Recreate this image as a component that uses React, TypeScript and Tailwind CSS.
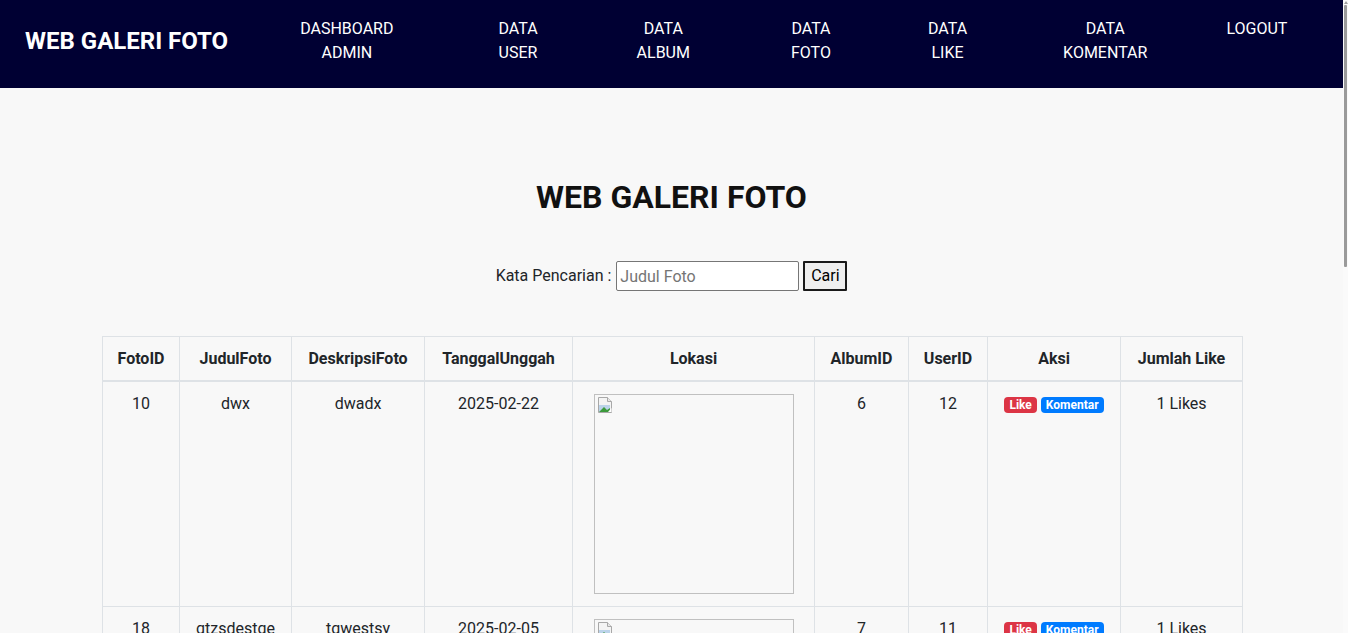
import React from "react";

const navItems = [
  { lines: ["DASHBOARD", "ADMIN"], ml: "ml-[72px]" },
  { lines: ["DATA", "USER"], ml: "ml-[105px]" },
  { lines: ["DATA", "ALBUM"], ml: "ml-[99px]" },
  { lines: ["DATA", "FOTO"], ml: "ml-[101px]" },
  { lines: ["DATA", "LIKE"], ml: "ml-[97px]" },
  { lines: ["DATA", "KOMENTAR"], ml: "ml-[96px]" },
  { lines: ["LOGOUT"], ml: "ml-[79px]" },
];

const columns = [
  { label: "FotoID", w: "w-[77px]" },
  { label: "JudulFoto", w: "w-[112px]" },
  { label: "DeskripsiFoto", w: "w-[133px]" },
  { label: "TanggalUnggah", w: "w-[148px]" },
  { label: "Lokasi", w: "w-[242px]" },
  { label: "AlbumID", w: "w-[94px]" },
  { label: "UserID", w: "w-[79px]" },
  { label: "Aksi", w: "w-[133px]" },
  { label: "Jumlah Like", w: "w-[122px]" },
];

const rows = [
  { id: 10, judul: "dwx", desk: "dwadx", tgl: "2025-02-22", album: 6, user: 12, likes: 1 },
  { id: 18, judul: "gtzsdestge", desk: "tgwestsy", tgl: "2025-02-05", album: 7, user: 11, likes: 1 },
  { id: 19, judul: "pantai", desk: "liburan", tgl: "2025-02-05", album: 7, user: 11, likes: 0 },
  { id: 21, judul: "gunung", desk: "pemandangan", tgl: "2025-02-04", album: 8, user: 12, likes: 0 },
];

function BrokenImage() {
  return (
    <div className="w-[200px] h-[200px] border border-[#c0c0c0] mx-auto">
      <svg width="18" height="18" viewBox="0 0 18 18" className="mt-[1px] ml-[1px]">
        <path d="M2.5 1.5h9l4 4v11h-13z" fill="#f4f4f4" stroke="#a8a8a8" />
        <path d="M11.5 1.5v4h4" fill="#e8e8e8" stroke="#a8a8a8" />
        <path d="M3 9h11v7H3z" fill="#bcd3ea" />
        <path d="M3 16l5-5 3 3 3-2v4z" fill="#3c9a3c" />
        <path d="M12 16l3.5-4v4z" fill="#ffffff" />
      </svg>
    </div>
  );
}

export default function App() {
  return (
    <div className="flex h-screen overflow-hidden bg-[#f8f8f8] text-[#212529] font-['Roboto','Liberation_Sans',sans-serif]">
      <div className="w-[1343px] shrink-0">
        <nav className="h-[88px] bg-[#000033] flex items-start text-white">
          <a className="ml-[25px] mt-[27px] text-[24px] font-bold leading-[28px]">WEB GALERI FOTO</a>
          <ul className="flex items-start">
            {navItems.map((item, i) => (
              <li key={i} className={`${item.ml} mt-[17px] text-center text-[16px] leading-[24px]`}>
                {item.lines.map(l => (
                  <div key={l}>{l}</div>
                ))}
              </li>
            ))}
          </ul>
        </nav>

        <main>
          <h1 className="mt-[90px] text-center text-[32px] font-bold leading-[38px] text-[#111111]">WEB GALERI FOTO</h1>

          <form className="mt-[45px] flex justify-center items-center gap-[4px] text-[16px]">
            <label className="mr-[1px]">Kata Pencarian :</label>
            <input
              type="text"
              placeholder="Judul Foto"
              className="w-[183px] h-[30px] px-[3px] border border-[#767676] rounded-[2px] bg-white placeholder:text-[#757575] outline-none"
            />
            <button type="button" className="w-[44px] h-[30px] border-2 border-[#1a1a1a] bg-[#efefef] rounded-[1px] text-black">
              Cari
            </button>
          </form>

          <table className="mt-[45px] ml-[102px] w-[1140px] table-fixed border-collapse text-[16px]">
            <thead>
              <tr>
                {columns.map(c => (
                  <th
                    key={c.label}
                    className={`${c.w} border border-[#dee2e6] border-b-2 pt-[12px] pb-[11px] px-[6px] leading-[20px] font-bold text-center`}
                  >
                    {c.label}
                  </th>
                ))}
              </tr>
            </thead>
            <tbody>
              {rows.map(r => (
                <tr key={r.id}>
                  <td className="border border-[#dee2e6] p-[12px] leading-[20px] text-center align-top">{r.id}</td>
                  <td className="border border-[#dee2e6] p-[12px] leading-[20px] text-center align-top">{r.judul}</td>
                  <td className="border border-[#dee2e6] p-[12px] leading-[20px] text-center align-top">{r.desk}</td>
                  <td className="border border-[#dee2e6] p-[12px] leading-[20px] text-center align-top">{r.tgl}</td>
                  <td className="border border-[#dee2e6] p-[12px] align-top">
                    <BrokenImage />
                  </td>
                  <td className="border border-[#dee2e6] p-[12px] leading-[20px] text-center align-top">{r.album}</td>
                  <td className="border border-[#dee2e6] p-[12px] leading-[20px] text-center align-top">{r.user}</td>
                  <td className="border border-[#dee2e6] p-[12px] leading-[20px] text-center align-top">
                    <div className="flex justify-center gap-[4px] mt-[3px]">
                      <span className="bg-[#dc3545] text-white text-[12px] font-bold leading-[16px] px-[5px] rounded-[4px]">Like</span>
                      <span className="bg-[#007bff] text-white text-[12px] font-bold leading-[16px] px-[5px] rounded-[4px]">Komentar</span>
                    </div>
                  </td>
                  <td className="border border-[#dee2e6] p-[12px] leading-[20px] text-center align-top">{r.likes} Likes</td>
                </tr>
              ))}
            </tbody>
          </table>
        </main>
      </div>

      {/* thin scrollbar at the right edge */}
      <div className="w-[5px] shrink-0 bg-[#fafafa] flex flex-col items-center">
        <div className="w-0 h-0 border-l-[2px] border-r-[2px] border-b-[3px] border-l-transparent border-r-transparent border-b-[#a0a0a0] mt-[1px]" />
        <div className="w-[3px] h-[262px] mt-[1px] bg-[#9a9a9a] rounded-[1px]" />
      </div>
    </div>
  );
}
